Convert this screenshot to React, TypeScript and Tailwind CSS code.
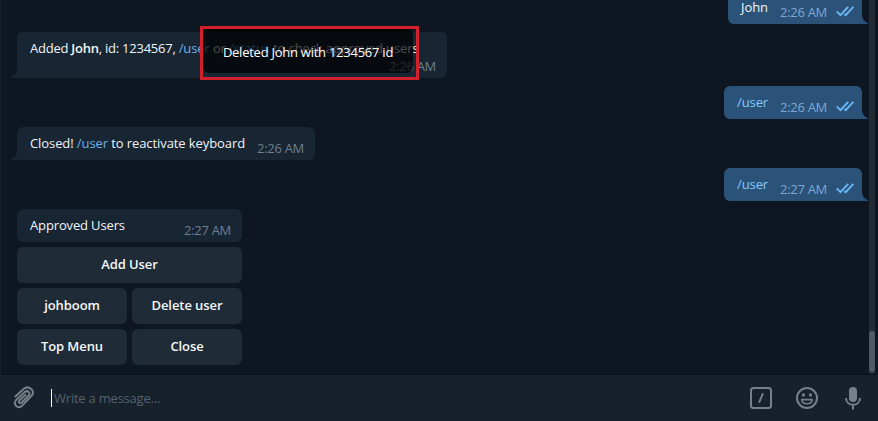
import type { ReactNode } from 'react';

function Checks() {
  return (
    <svg width="18" height="11" viewBox="0 0 18 11" className="mb-[7px] ml-[9px] shrink-0" fill="none" stroke="#6cb8f5" strokeWidth="1.9">
      <path d="M0.7 5.4 L4.5 9.2 L12.2 0.8" />
      <path d="M8.4 8 L9.7 9.2 L17.4 0.8" />
    </svg>
  );
}

function Time({ children, className }: { children: ReactNode; className: string }) {
  return <span className={`shrink-0 self-end whitespace-pre pb-[3px] leading-[18px] tracking-[-0.3px] ${className}`}>{children}</span>;
}

function Incoming({ children, time, width, tail = true, stacked = false }: { children: ReactNode; time: string; width: string; tail?: boolean; stacked?: boolean }) {
  return (
    <div className={`relative flex shrink-0 rounded-[6px] bg-[#182533] pl-[13px] pr-[11px] ${tail ? 'rounded-bl-none' : ''} ${stacked ? 'h-[46px] flex-col' : 'h-[33px] justify-between'} ${width}`}>
      <p className="whitespace-pre pt-[7px] leading-[18px] tracking-[-0.09px] text-[#f1f4f6]">{children}</p>
      <Time className="text-[#6d7f8f]">{time}</Time>
      {tail && (
        <svg className="absolute -left-[6px] bottom-0" width="7" height="10" viewBox="0 0 7 10" fill="#182533">
          <path d="M6 0 C6 5 4 7.5 0 9.2 V10 H7 V0Z" />
        </svg>
      )}
    </div>
  );
}

function Outgoing({ children, time, width }: { children: ReactNode; time: string; width: string }) {
  return (
    <div className={`relative mr-4 flex h-[33px] shrink-0 self-end rounded-[6px] rounded-br-none bg-[#2b5278] pl-[13px] pr-[8px] ${width}`}>
      <p className="flex-1 pt-[7px] leading-[18px] tracking-[-0.09px]">{children}</p>
      <Time className="text-[#7da8d3]">{time}</Time>
      <span className="flex self-end"><Checks /></span>
      <svg className="absolute -right-[6px] bottom-0" width="7" height="10" viewBox="0 0 7 10" fill="#2b5278">
        <path d="M1 0 C1 5 3 7.5 7 9.2 V10 H0 V0Z" />
      </svg>
    </div>
  );
}

function Key({ label, wide = false }: { label: string; wide?: boolean }) {
  return (
    <button className={`h-9 rounded-[6px] bg-[#1f2c38] pb-px text-center font-semibold tracking-[-0.08px] text-[#f5f7f8] ${wide ? 'col-span-2' : ''}`}>
      {label}
    </button>
  );
}

export default function App() {
  return (
    <div className="relative flex h-[421px] w-[878px] flex-col overflow-hidden bg-[#0e1621] font-['Open_Sans','Noto_Sans',sans-serif] text-[13px]">
      <div className="flex h-[375px] shrink-0 border-b border-[#0a1017]">
        <main className="flex flex-1 flex-col justify-end gap-2 overflow-hidden pb-[9px] pl-[17px]">
          <Outgoing time="2:26 AM" width="w-[134px]"><span className="text-[#f1f4f6]">John</span></Outgoing>
          <Incoming time="2:26 AM" width="w-[430px]" stacked>
            <span className="tracking-[-0.24px]">Added <b className="font-semibold">John</b>, id: 1234567, </span><span className="tracking-[-0.12px]"><span className="text-[#70b1e8]">/user</span> or <span className="text-[#70b1e8]">/status</span> to check approved users</span>
          </Incoming>
          <Outgoing time="2:26 AM" width="w-[138px]"><span className="text-[#83caff]">/user</span></Outgoing>
          <Incoming time="2:26 AM" width="w-[298px]">
            Closed! <span className="text-[#70b1e8]">/user</span> to reactivate keyboard
          </Incoming>
          <Outgoing time="2:27 AM" width="w-[138px]"><span className="text-[#83caff]">/user</span></Outgoing>
          <section className="flex w-[225px] shrink-0 flex-col gap-[5px]">
            <Incoming time="2:27 AM" width="w-[225px]" tail={false}><span className="tracking-[-0.14px]">Approved Users</span></Incoming>
            <div className="grid grid-cols-2 gap-[5px]">
              <Key label="Add User" wide />
              <Key label="johboom" />
              <Key label="Delete user" />
              <Key label="Top Menu" />
              <Key label="Close" />
            </div>
          </section>
        </main>
        <div className="-ml-[9px] mr-[3px] flex w-[6px] flex-col justify-end bg-[#242c36] pb-[2px]">
          <div className="h-[41px] rounded-full bg-[#515962]" />
        </div>
      </div>

      <footer className="flex h-[46px] items-center bg-[#17212b] pl-[13px] pr-[17px] text-[#768089]">
        <svg width="22" height="24" viewBox="0 0 22 24" fill="none" stroke="currentColor" strokeWidth="2" strokeLinecap="round" strokeLinejoin="round">
          <path d="M2.4 10.6 L10.8 2.8 C15.9 -1.2 23 5 18.6 9.8 L9.2 19.6 C4.9 23.8 -0.8 17.9 3.1 14.1 L11.7 6.1 C14.8 3.6 18 7 15.5 9.8 L8.5 16.7 C6.8 18 5 16.1 6.3 14.6 L12.4 8.9" />
        </svg>
        <div className="ml-4 h-[18px] w-px bg-white" />
        <span className="ml-[2px] flex-1 pt-[2px] tracking-[-0.22px] text-[#55626e]">Write a message...</span>
        <svg width="22" height="22" viewBox="0 0 22 22" fill="none" stroke="currentColor" strokeWidth="2">
          <rect x="1" y="1" width="20" height="20" rx="2.5" />
          <path d="M13 6.3 L9 15.7" />
        </svg>
        <svg className="ml-6" width="22" height="22" viewBox="0 0 22 22" fill="none" stroke="currentColor" strokeWidth="2">
          <circle cx="11" cy="11" r="10" />
          <ellipse cx="7.5" cy="8" rx="1.6" ry="1.8" fill="currentColor" stroke="none" />
          <ellipse cx="14.5" cy="8" rx="1.6" ry="1.8" fill="currentColor" stroke="none" />
          <path d="M5.7 12.6 H16.3 C15.4 18.2 6.6 18.2 5.7 12.6Z" strokeWidth="1.6" strokeLinejoin="round" />
        </svg>
        <svg className="ml-[27px]" width="16" height="24" viewBox="0 0 16 24" fill="none" stroke="currentColor" strokeWidth="2">
          <rect x="4" y="1" width="8" height="15" rx="4" fill="currentColor" stroke="none" />
          <path d="M1 12 C1 21 15 21 15 12 M8 19 V23.5" />
        </svg>
      </footer>

      <div className="absolute left-0 top-0 h-full w-px bg-[#17212b]" />
      <div className="absolute left-[200px] top-[26px] h-[54px] w-[219px] border-[3px] border-[#d3202d]">
        <div className="flex h-[44px] w-[210px] items-center justify-center whitespace-pre rounded-[6px] bg-black/70 pt-[3px] tracking-[-0.25px] text-white">
          Deleted John with 1234567 id
        </div>
      </div>
    </div>
  );
}
